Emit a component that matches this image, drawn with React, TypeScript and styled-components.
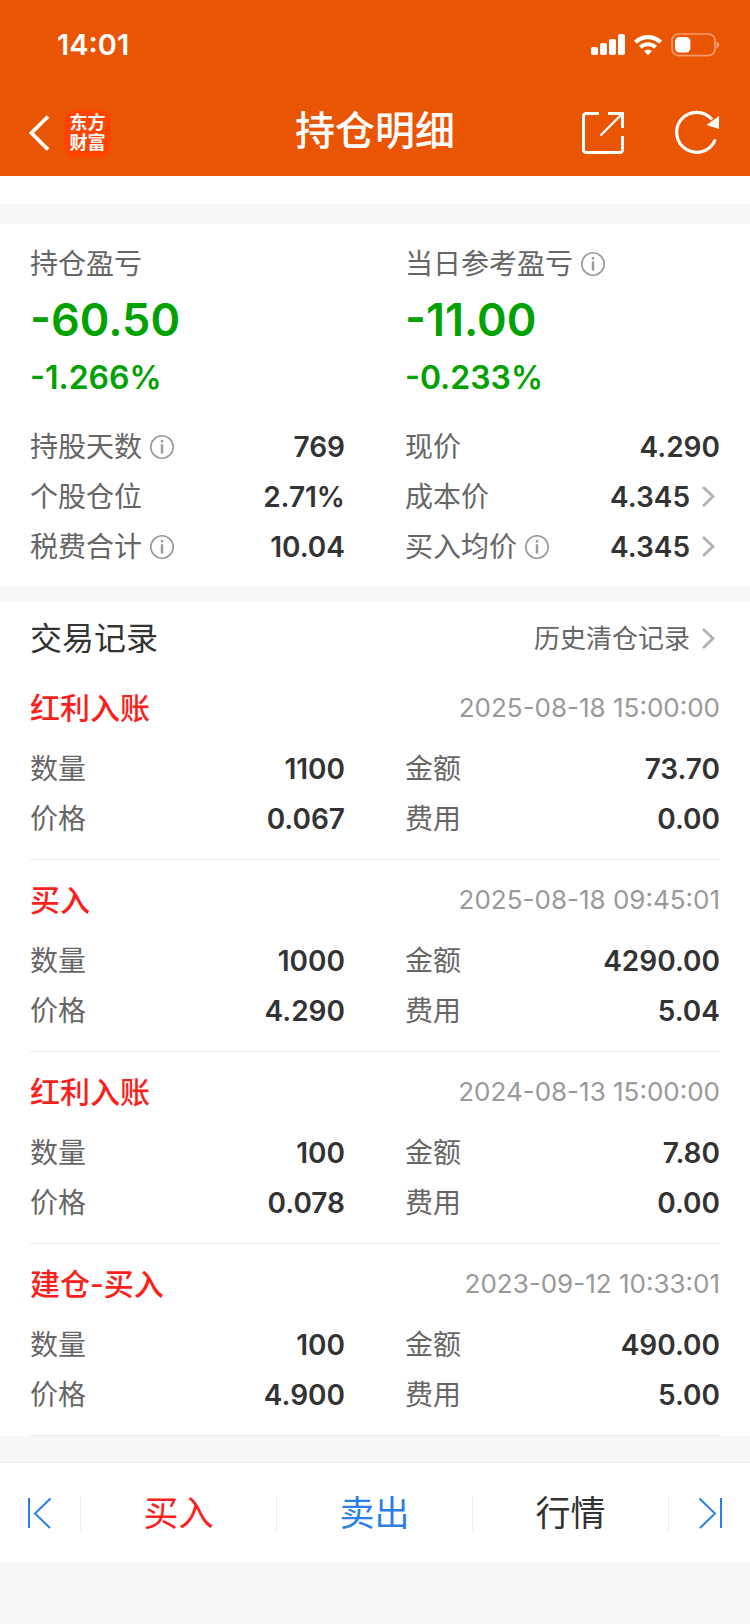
import React from "react";
import styled, { createGlobalStyle } from "styled-components";

const color = {
  brand: "#ea5504",
  logo: "#ff4400",
  ink: "#333333",
  label: "#666666",
  muted: "#999999",
  chevron: "#b2b2b2",
  line: "#ececee",
  page: "#f7f8fa",
  down: "#00a100",
  buy: "#fb1f20",
  sell: "#2c7fe6",
};

const GlobalStyle = createGlobalStyle`
  *, *::before, *::after { box-sizing: border-box; }
  body {
    margin: 0;
    background: ${color.page};
    color: ${color.ink};
    font-family: Inter, "Noto Sans CJK SC", sans-serif;
    font-size: 28px;
    line-height: 40px;
  }
  h1, h2, h3, p, dl, dt, dd { margin: 0; font-weight: inherit; }
  svg { display: block; flex: none; overflow: visible; }
`;

const PlainButton = styled.button`
  display: flex;
  align-items: center;
  justify-content: center;
  margin: 0;
  padding: 0;
  border: 0;
  background: none;
  color: inherit;
  font: inherit;
  cursor: pointer;
`;

const Header = styled.header`
  background: ${color.brand};
  color: #fff;
`;

const StatusBar = styled.div`
  display: flex;
  align-items: center;
  justify-content: space-between;
  height: 90px;
  padding: 0 31px 0 57px;
`;

const Clock = styled.time`
  font-size: 29px;
  font-weight: 600;
`;

const NavBar = styled.nav`
  display: grid;
  grid-template-columns: 1fr auto 1fr;
  align-items: center;
  height: 86px;
  padding: 0 30px;
`;

const NavSide = styled.div<{ $end?: boolean }>`
  display: flex;
  align-items: center;
  justify-content: ${(p) => (p.$end ? "flex-end" : "flex-start")};
  gap: ${(p) => (p.$end ? 51 : 14)}px;
`;

const NavTitle = styled.h1`
  padding-bottom: 4px;
  font-size: 40px;
  font-weight: 500;
  line-height: 48px;
`;

const Logo = styled.span`
  display: flex;
  align-items: center;
  justify-content: center;
  width: 47px;
  height: 47px;
  border-radius: 10px;
  background: ${color.logo};
  font-size: 18px;
  font-weight: 700;
  line-height: 20px;
  text-align: center;
`;

const Panel = styled.section<{ $gap?: number }>`
  margin-top: ${(p) => p.$gap ?? 0}px;
  padding: 0 30px;
  background: #fff;
`;

const ScrolledCard = styled.div`
  height: 28px;
  background: #fff;
`;

const Columns = styled.div`
  display: grid;
  grid-template-columns: 1fr 1fr;
  column-gap: 60px;
`;

const Summary = styled(Panel)`
  padding-top: 20px;
  padding-bottom: 14px;
`;

const ProfitLabel = styled.h2`
  display: flex;
  align-items: center;
  gap: 8px;
  height: 40px;
  color: ${color.label};
  font-size: 28px;
`;

const ProfitValue = styled.p`
  height: 72px;
  color: ${color.down};
  font-size: 45px;
  font-weight: 600;
  line-height: 72px;
`;

const ProfitRate = styled.p`
  height: 66px;
  padding-bottom: 22px;
  color: ${color.down};
  font-size: 32px;
  font-weight: 600;
  line-height: 44px;
`;

const Fields = styled.dl`
  display: grid;
  grid-template-columns: 1fr 1fr;
  column-gap: 60px;
`;

const Field = styled.div`
  display: flex;
  align-items: center;
  justify-content: space-between;
  height: 50px;
`;

const FieldLabel = styled.dt`
  display: flex;
  align-items: center;
  gap: 8px;
  color: ${color.label};
`;

const FieldValue = styled.dd`
  font-weight: 600;
`;

const SectionHead = styled.div`
  display: flex;
  align-items: center;
  justify-content: space-between;
  height: 73px;
`;

const SectionTitle = styled.h2`
  font-size: 32px;
`;

const HistoryLink = styled.a`
  display: flex;
  align-items: center;
  color: ${color.label};
  font-size: 26px;
  text-decoration: none;
`;

const Record = styled.article`
  padding: 8px 0 15px;
  border-bottom: 1px solid ${color.line};

  & + & { padding-top: 15px; }
`;

const RecordHead = styled.div`
  display: flex;
  align-items: center;
  justify-content: space-between;
  height: 50px;
  margin-bottom: 11px;
`;

const RecordTitle = styled.h3`
  color: ${color.buy};
  font-size: 30px;
  font-weight: 500;
`;

const RecordTime = styled.time`
  color: ${color.muted};
  font-size: 26px;
`;

const ActionBar = styled.footer`
  display: grid;
  grid-template-columns: 81px 1fr 1fr 1fr 81px;
  align-items: center;
  height: 100px;
  margin-top: 26px;
  border-top: 1px solid ${color.line};
  background: #fff;
`;

const Action = styled(PlainButton)<{ $tone: string }>`
  height: 34px;
  border-right: 1px solid ${color.line};
  color: ${(p) => p.$tone};
  font-size: 35px;

  &:last-child { border-right: 0; }
`;

const BottomInset = styled.div`
  height: 62px;
`;

const StatusIcons = () => (
  <svg width="128" height="24" viewBox="0 0 128 24" fill="#fff" aria-hidden="true">
    <rect x="0" y="14" width="7" height="8" rx="2" />
    <rect x="9" y="10" width="7" height="12" rx="2" />
    <rect x="18" y="6" width="7" height="16" rx="2" />
    <rect x="27" y="1" width="7" height="21" rx="2" />
    <g fill="none" stroke="#fff" strokeWidth="4.2">
      <path d="M44.4 9.2a18 18 0 0 1 25.2 0" />
      <path d="M49.4 14.3a11 11 0 0 1 15.2 0" />
    </g>
    <path d="M57 22.2l-4-4.2a6 6 0 0 1 8 0z" />
    <rect x="81" y="1" width="43" height="21.6" rx="6.5" fill="none" stroke="#fff" strokeOpacity=".42" strokeWidth="1.7" />
    <path d="M125.6 8.5c3.2 1.2 3.2 5.6 0 6.8z" fillOpacity=".5" />
    <rect x="84" y="4" width="15.4" height="15.6" rx="4.5" />
  </svg>
);

const BackIcon = () => (
  <svg width="20" height="36" viewBox="0 0 20 36" fill="none" stroke="#fff" strokeWidth="3.8" aria-hidden="true">
    <path d="M18 1.500L1.500 18l16.500 16.500" />
  </svg>
);

const ShareIcon = () => (
  <svg width="42" height="42" viewBox="0 0 42 42" fill="none" stroke="#fff" aria-hidden="true">
    <path strokeWidth="3" d="M17 1.5H4a2.5 2.5 0 0 0-2.5 2.5v34a2.5 2.5 0 0 0 2.5 2.5h34a2.5 2.5 0 0 0 2.5-2.5V24" />
    <path strokeWidth="3" d="M26 1.5h14.5V16" />
    <path strokeWidth="2.4" d="M40 2L18.5 23.5" />
  </svg>
);

const RefreshIcon = () => (
  <svg width="45" height="44" viewBox="0 0 45 44" fill="none" aria-hidden="true">
    <path stroke="#fff" strokeWidth="3.2" d="M40.300 28.500A20 20 0 1 1 37 8.500" />
    <path fill="#fff" d="M44 5V18L31.500 14z" />
  </svg>
);

const Chevron = () => (
  <svg width="30" height="22" viewBox="0 0 30 22" fill="none" stroke={color.chevron} strokeWidth="2.8" aria-hidden="true">
    <path d="M13 1L23 10.500L13 20" />
  </svg>
);

const FirstIcon = () => (
  <svg width="26" height="32" viewBox="0 0 26 32" fill="none" stroke={color.sell} strokeWidth="2" aria-hidden="true">
    <path d="M2 1v30M23.500 1.500L8 16.500l15 14.500" />
  </svg>
);

const LastIcon = () => (
  <svg width="26" height="32" viewBox="0 0 26 32" fill="none" stroke={color.sell} strokeWidth="2" aria-hidden="true">
    <path d="M24 1v30M2.500 1.500L18 16.500L3 31" />
  </svg>
);

const Info = ({ about }: { about: string }) => (
  <PlainButton type="button" aria-label={`${about}说明`}>
    <svg width="24" height="24" viewBox="0 0 24 24" fill="none" stroke={color.muted} aria-hidden="true">
      <circle cx="12" cy="12" r="11.200" strokeWidth="1.600" />
      <path strokeWidth="2.400" d="M12 9.300v9.200M12 5v2.400" />
    </svg>
  </PlainButton>
);

type FieldData = { label: string; value: string; info?: boolean; more?: boolean };

const FieldGrid = ({ items }: { items: FieldData[] }) => (
  <Fields>
    {items.map((item) => (
      <Field key={item.label}>
        <FieldLabel>
          {item.label}
          {item.info && <Info about={item.label} />}
        </FieldLabel>
        <FieldValue>
          {item.more ? (
            <PlainButton type="button">
              {item.value}
              <Chevron />
            </PlainButton>
          ) : (
            item.value
          )}
        </FieldValue>
      </Field>
    ))}
  </Fields>
);

const holding: FieldData[] = [
  { label: "持股天数", value: "769", info: true },
  { label: "现价", value: "4.290" },
  { label: "个股仓位", value: "2.71%" },
  { label: "成本价", value: "4.345", more: true },
  { label: "税费合计", value: "10.04", info: true },
  { label: "买入均价", value: "4.345", info: true, more: true },
];

const records = [
  { title: "红利入账", time: "2025-08-18 15:00:00", count: "1100", amount: "73.70", price: "0.067", fee: "0.00" },
  { title: "买入", time: "2025-08-18 09:45:01", count: "1000", amount: "4290.00", price: "4.290", fee: "5.04" },
  { title: "红利入账", time: "2024-08-13 15:00:00", count: "100", amount: "7.80", price: "0.078", fee: "0.00" },
  { title: "建仓-买入", time: "2023-09-12 10:33:01", count: "100", amount: "490.00", price: "4.900", fee: "5.00" },
];

export default function App() {
  return (
    <>
      <GlobalStyle />
      <Header>
        <StatusBar>
          <Clock>14:01</Clock>
          <StatusIcons />
        </StatusBar>
        <NavBar>
          <NavSide>
            <PlainButton type="button" aria-label="返回">
              <BackIcon />
            </PlainButton>
            <Logo>
              东方
              <br />
              财富
            </Logo>
          </NavSide>
          <NavTitle>持仓明细</NavTitle>
          <NavSide $end>
            <PlainButton type="button" aria-label="分享">
              <ShareIcon />
            </PlainButton>
            <PlainButton type="button" aria-label="刷新">
              <RefreshIcon />
            </PlainButton>
          </NavSide>
        </NavBar>
      </Header>
      <main>
        <ScrolledCard />
        <Summary $gap={20}>
          <Columns>
            <div>
              <ProfitLabel>持仓盈亏</ProfitLabel>
              <ProfitValue>-60.50</ProfitValue>
              <ProfitRate>-1.266%</ProfitRate>
            </div>
            <div>
              <ProfitLabel>
                当日参考盈亏
                <Info about="当日参考盈亏" />
              </ProfitLabel>
              <ProfitValue>-11.00</ProfitValue>
              <ProfitRate>-0.233%</ProfitRate>
            </div>
          </Columns>
          <FieldGrid items={holding} />
        </Summary>
        <Panel $gap={16}>
          <SectionHead>
            <SectionTitle>交易记录</SectionTitle>
            <HistoryLink href="#history">
              历史清仓记录
              <Chevron />
            </HistoryLink>
          </SectionHead>
          {records.map((r) => (
            <Record key={r.time}>
              <RecordHead>
                <RecordTitle>{r.title}</RecordTitle>
                <RecordTime>{r.time}</RecordTime>
              </RecordHead>
              <FieldGrid
                items={[
                  { label: "数量", value: r.count },
                  { label: "金额", value: r.amount },
                  { label: "价格", value: r.price },
                  { label: "费用", value: r.fee },
                ]}
              />
            </Record>
          ))}
        </Panel>
      </main>
      <ActionBar>
        <Action type="button" $tone={color.sell} aria-label="上一只">
          <FirstIcon />
        </Action>
        <Action type="button" $tone={color.buy}>买入</Action>
        <Action type="button" $tone={color.sell}>卖出</Action>
        <Action type="button" $tone={color.ink}>行情</Action>
        <Action type="button" $tone={color.sell} aria-label="下一只">
          <LastIcon />
        </Action>
      </ActionBar>
      <BottomInset />
    </>
  );
}
